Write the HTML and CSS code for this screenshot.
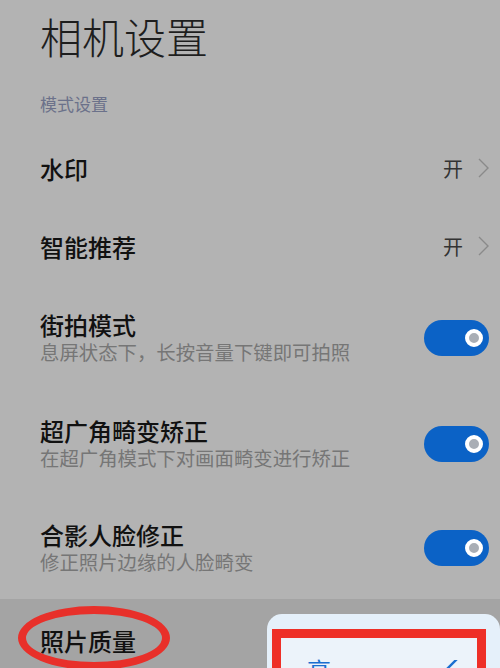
FILE: index.html
```html
<!DOCTYPE html>
<html lang="zh-CN">
<head>
<meta charset="utf-8">
<title>相机设置</title>
<link rel="stylesheet" href="styles.css">
</head>
<body>
<div class="page">
  <header class="header">
    <h1 class="title">相机设置</h1>
    <div class="section-label">模式设置</div>
  </header>
  <ul class="list">
    <li class="row row-simple">
      <span class="row-title">水印</span>
      <span class="value">开<svg class="chev" width="11" height="20" viewBox="0 0 11 20"><path d="M1 1 L10 10 L1 19" fill="none" stroke="#8a8a8a" stroke-width="1.4"/></svg></span>
    </li>
    <li class="row row-simple">
      <span class="row-title">智能推荐</span>
      <span class="value">开<svg class="chev" width="11" height="20" viewBox="0 0 11 20"><path d="M1 1 L10 10 L1 19" fill="none" stroke="#8a8a8a" stroke-width="1.4"/></svg></span>
    </li>
    <li class="row row-double r1">
      <div class="texts">
        <div class="row-title">街拍模式</div>
        <div class="row-sub">息屏状态下，长按音量下键即可拍照</div>
      </div>
      <span class="toggle"><span class="knob"></span></span>
    </li>
    <li class="row row-double r2">
      <div class="texts">
        <div class="row-title">超广角畸变矫正</div>
        <div class="row-sub">在超广角模式下对画面畸变进行矫正</div>
      </div>
      <span class="toggle"><span class="knob"></span></span>
    </li>
    <li class="row row-double r3">
      <div class="texts">
        <div class="row-title">合影人脸修正</div>
        <div class="row-sub">修正照片边缘的人脸畸变</div>
      </div>
      <span class="toggle"><span class="knob"></span></span>
    </li>
  </ul>
  <section class="bottom">
    <div class="bottom-title">照片质量</div>
    <span class="ellipse"></span>
    <div class="popup">
      <div class="popup-box">
        <span class="opt">高</span>
        <svg class="check" width="22" height="14" viewBox="0 0 22 14"><path d="M2 12 L20 -6" fill="none" stroke="#1a6fd0" stroke-width="2.4" stroke-linecap="round"/></svg>
      </div>
    </div>
  </section>
</div>
</body>
</html>
```
FILE: styles.css
```css
* { box-sizing: border-box; }
html, body {
  margin: 0;
  padding: 0;
  background: #b3b3b3;
}
body {
  font-family: "Noto Sans CJK SC", "Noto Sans", sans-serif;
  width: 500px;
  height: 668px;
  overflow: hidden;
}
.page {
  position: relative;
  height: 668px;
  display: flex;
  flex-direction: column;
}
.header {
  padding-left: 40px;
}
.title {
  margin: 0;
  font-size: 42px;
  font-weight: 300;
  line-height: 72px;
  color: #1e1e1e;
}
.section-label {
  margin-top: 18px;
  font-size: 17px;
  line-height: 28px;
  color: #6b718a;
}
.list {
  list-style: none;
  margin: 11px 0 0;
  padding: 0;
}
.row {
  display: flex;
  align-items: center;
  justify-content: space-between;
  padding: 0 11px 0 40px;
}
.row-simple { height: 78px; }
.r1 { height: 106px; }
.r2 { height: 105px; }
.r3 { height: 103px; }
.row-title {
  font-size: 24px;
  font-weight: 500;
  line-height: 27px;
  color: #111;
}
.row-sub {
  font-size: 19.4px;
  line-height: 27px;
  color: #767676;
}
.value {
  display: flex;
  align-items: center;
  gap: 15px;
  font-size: 20px;
  color: #333;
}
.chev { display: block; }
.toggle {
  position: relative;
  width: 65px;
  height: 36px;
  border-radius: 18px;
  background: #0b62c6;
}
.knob {
  position: absolute;
  right: 6px;
  top: 9px;
  width: 18px;
  height: 18px;
  border-radius: 50%;
  border: 4px solid #ffffff;
  background: #a9aeb5;
}
.bottom {
  position: relative;
  flex: 1;
  background: #a4a4a4;
  padding-left: 40px;
}
.bottom-title {
  margin-top: 28px;
  font-size: 24px;
  font-weight: 500;
  line-height: 27px;
  color: #111;
}
.ellipse {
  position: absolute;
  left: 18px;
  top: 7px;
  width: 152px;
  height: 64px;
  border: 8px solid #e8302a;
  border-radius: 50%;
}
.popup {
  position: absolute;
  left: 267px;
  top: 15px;
  width: 233px;
  height: 80px;
  background: #e5f0fa;
  border-radius: 15px;
  padding: 15px 0 0 5px;
}
.popup-box {
  position: relative;
  width: 214px;
  height: 70px;
  border: 9px solid #ee2f27;
  background: #ecf3fa;
}
.opt {
  position: absolute;
  left: 26px;
  top: 18px;
  font-size: 24px;
  line-height: 28px;
  color: #1a6fd0;
}
.check {
  position: absolute;
  left: 161px;
  top: 22px;
}
```
